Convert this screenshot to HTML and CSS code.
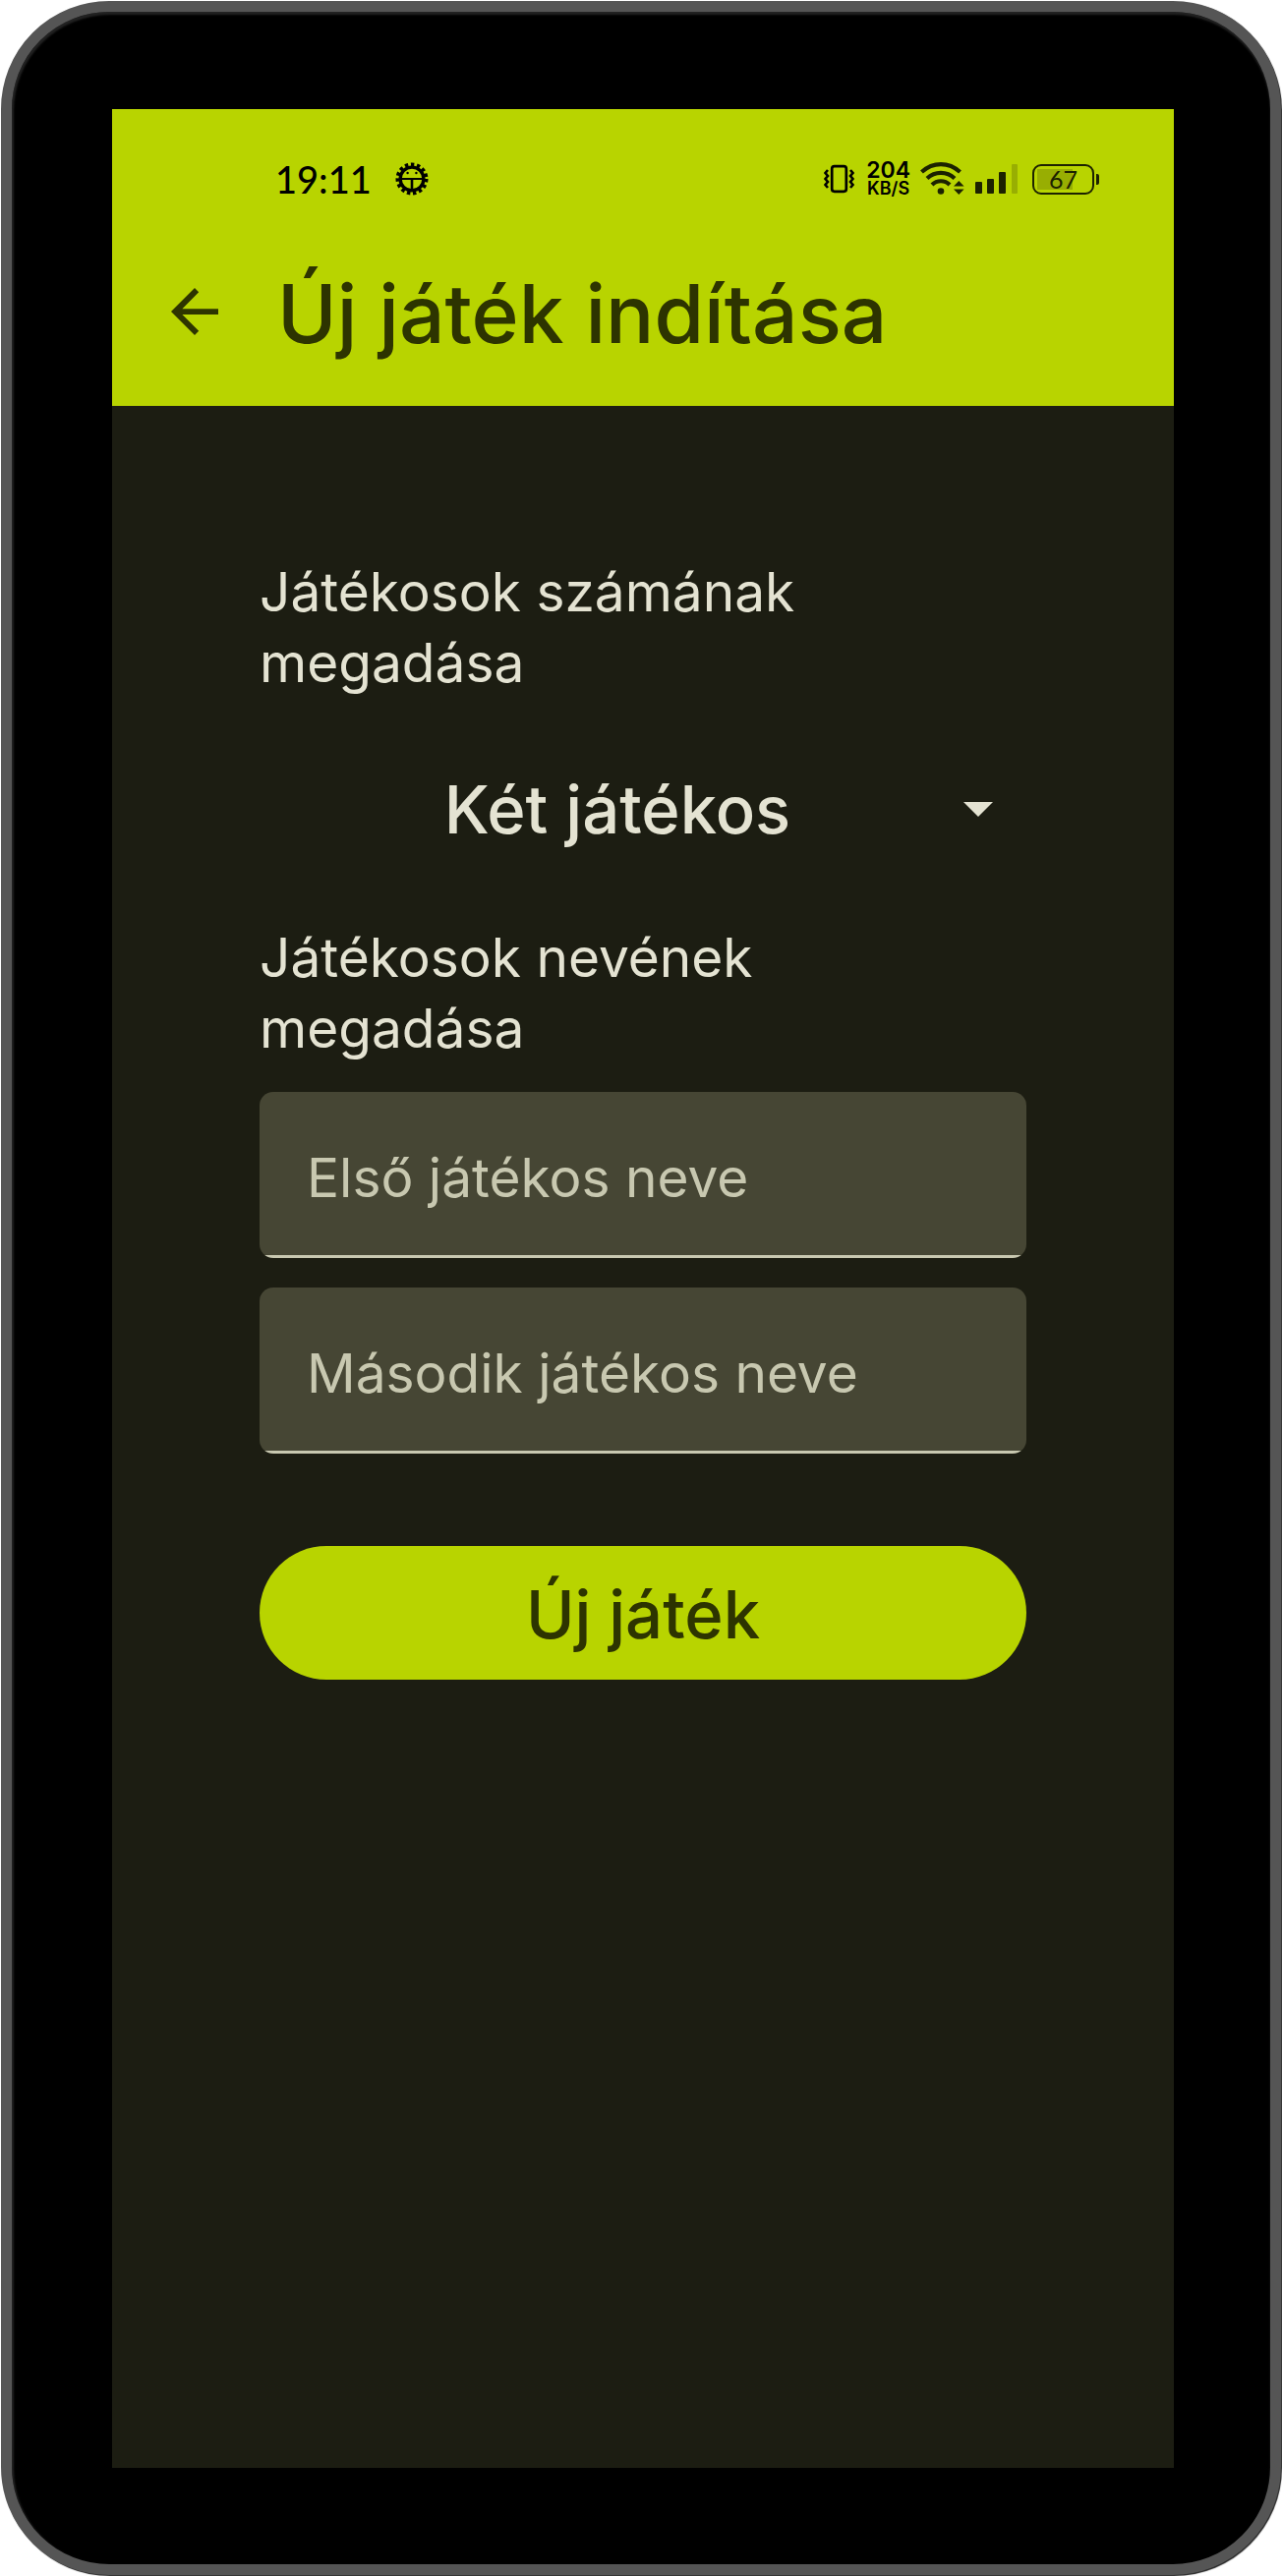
FILE: index.html
```html
<!DOCTYPE html>
<html lang="hu">
<head>
<meta charset="utf-8">
<meta name="viewport" content="width=device-width, initial-scale=1">
<title>Új játék indítása</title>
<link rel="stylesheet" href="styles.css">
</head>
<body>
<div class="phone">
  <div class="screen">
    <header class="top">
      <div class="status">
        <div class="status-group">
          <span class="clock">19:11</span>
          <svg class="gear" width="34" height="34" viewBox="0 0 34 34" aria-hidden="true">
            <circle cx="17" cy="17" r="14.5" fill="none" stroke="#000" stroke-width="4" stroke-dasharray="3.4 2.674"/>
            <circle cx="17" cy="17" r="11.9" fill="none" stroke="#000" stroke-width="3.4"/>
            <path d="M5 17h24" fill="none" stroke="#000" stroke-width="2"/>
            <path d="M17 17v12" fill="none" stroke="#000" stroke-width="2.6"/>
            <circle cx="12.6" cy="11" r="1.2"/><circle cx="21.4" cy="11" r="1.2"/>
          </svg>
        </div>
        <div class="status-group status-right">
          <svg width="34" height="30" viewBox="0 0 34 30" aria-hidden="true">
            <rect x="9.2" y="2.2" width="14.6" height="25.6" rx="2.5" fill="none" stroke="#000" stroke-width="2.7"/>
            <path d="M5 6l-2.500 3 2.500 3-2.500 3 2.500 3-2.500 3 2.500 3M28 6l2.500 3-2.500 3 2.500 3-2.500 3 2.500 3-2.500 3" fill="none" stroke="#000" stroke-width="2.6"/>
          </svg>
          <div class="speed"><span class="speed-value">204</span><span class="speed-unit">KB/S</span></div>
          <svg class="wifi" width="46" height="36" viewBox="0 0 46 36" aria-hidden="true">
            <g fill="none" stroke="#1c2200" stroke-width="4.2">
              <path d="M1.500 11C13 .5 29 .5 40.500 11"/>
              <path d="M7 17.500c8-7.500 20-7.500 28 0"/>
              <path d="M12 24c5-5 13-5 18 0"/>
            </g>
            <g fill="#1c2200"><circle cx="21" cy="30.500" r="3.300"/>
              <path d="M34 25.500l5.300-5.500 5.300 5.500zM34 28.500h10.600l-5.300 5.500z"/></g>
          </svg>
          <svg class="signal" width="44" height="32" viewBox="0 0 44 32" aria-hidden="true">
            <g fill="#1c2200"><rect x="0" y="19" width="7" height="12" rx="1"/><rect x="12" y="16" width="7" height="15" rx="1"/><rect x="24" y="9" width="7" height="22" rx="1"/></g>
            <rect x="37" y="1" width="6" height="30" rx="1" fill="#98ae02"/>
          </svg>
          <div class="battery"><span class="battery-body">67</span><span class="battery-tip"></span></div>
        </div>
      </div>
      <div class="appbar">
        <button class="back" type="button" aria-label="Vissza">
          <svg width="48" height="48" viewBox="0 0 48 48" aria-hidden="true"><path d="M48 21.200H11.400L28.200 4.200 24 0 0 24l24 24 4.200-4.200L11.400 26.900H48z" fill="#2d3400"/></svg>
        </button>
        <h1 class="title">Új játék indítása</h1>
      </div>
    </header>
    <main class="content">
      <form class="form">
        <label class="label" for="count">Játékosok számának megadása</label>
        <div class="picker">
          <select class="select" id="count"><option>Két játékos</option></select>
          <svg class="caret" width="30" height="16" viewBox="0 0 30 16" aria-hidden="true"><path d="M0 0h30L15 15z" fill="#e4e3d2"/></svg>
        </div>
        <fieldset class="names">
          <legend class="label">Játékosok nevének megadása</legend>
          <input class="field" type="text" placeholder="Első játékos neve" aria-label="Első játékos neve">
          <input class="field" type="text" placeholder="Második játékos neve" aria-label="Második játékos neve">
        </fieldset>
        <button class="submit" type="button">Új játék</button>
      </form>
    </main>
  </div>
</div>
</body>
</html>
```
FILE: styles.css
```css
* { box-sizing: border-box; }

body {
  margin: 0;
  padding: 1px;
  background: #fff;
  font-family: Inter, "Liberation Sans", sans-serif;
}

.phone {
  display: flex;
  min-height: calc(100vh - 2px);
  padding: 99px 98px 98px 102px;
  border: 11px solid #555;
  border-radius: 110px;
  background: #000;
  box-shadow: inset 1px 2px 2px 1px #222, 1px 1px 1px #222;
}

.screen {
  flex: 1;
  min-width: 0;
  background: #1c1d12;
  color: #e4e3d2;
}

.top {
  background: #b8d400;
  color: #2d3400;
}

.status {
  display: flex;
  justify-content: space-between;
  align-items: center;
  height: 142px;
  padding: 0 76px 0 166px;
  color: #000;
}

.status-group {
  display: flex;
  align-items: center;
  gap: 24px;
}

.status-right { gap: 10px; }

.clock {
  font-family: Lato, sans-serif;
  font-size: 38px;
  font-weight: 500;
  line-height: 40px;
}

.speed {
  display: flex;
  flex-direction: column;
  align-items: center;
  font-weight: 600;
}

.speed-value { font-size: 23px; line-height: 20px; }
.speed-unit { font-size: 18px; line-height: 18px; }

.battery {
  display: flex;
  align-items: center;
  gap: 2px;
  margin-left: 4px;
  color: #1c2200;
}

.battery-body {
  width: 63px;
  height: 31px;
  border: 2px solid #1c2200;
  border-radius: 9px;
  background: linear-gradient(#98ae02, #98ae02) 3px 3px / 36px 21px no-repeat;
  font-family: Lato, sans-serif;
  font-size: 25px;
  line-height: 27px;
  text-align: center;
}

.battery-tip {
  width: 3px;
  height: 11px;
  border-radius: 0 2px 2px 0;
  background: #1c2200;
}

.appbar {
  display: flex;
  align-items: center;
  gap: 60px;
  height: 160px;
  padding: 0 60px 32px;
}

.back {
  display: flex;
  padding: 0;
  border: 0;
  background: none;
}

.title {
  margin: 6px 0 0;
  font-size: 82px;
  font-weight: 500;
  line-height: 96px;
}

.content { padding: 153px 150px; }

.form {
  display: flex;
  flex-direction: column;
}

.label {
  padding: 0;
  max-width: 600px;
  font-size: 55px;
  line-height: 72px;
}

.picker {
  display: grid;
  align-items: center;
  margin: 60px 0;
}

.picker > * { grid-area: 1 / 1; }

.select {
  width: 100%;
  height: 108px;
  padding: 0 52px 0 0;
  border: 0;
  appearance: none;
  background: transparent;
  color: #e4e3d2;
  font: 500 67px/108px Inter, "Liberation Sans", sans-serif;
  text-align-last: center;
}

.caret {
  justify-self: end;
  margin-right: 34px;
  pointer-events: none;
}

.names {
  display: flex;
  flex-direction: column;
  gap: 30px;
  min-width: 0;
  margin: 0;
  padding: 0;
  border: 0;
}

.names .label { margin-bottom: 29px; }

.field {
  width: 100%;
  height: 169px;
  padding: 4px 48px 0;
  border: 0;
  border-radius: 14px;
  background: linear-gradient(#c8c8b0, #c8c8b0) bottom / 100% 3px no-repeat #464634;
  color: #e4e3d2;
  font: 400 55px/72px Inter, "Liberation Sans", sans-serif;
}

.field::placeholder {
  color: #c8c8b0;
  opacity: 1;
}

.submit {
  height: 136px;
  margin-top: 94px;
  padding-top: 4px;
  border: 0;
  border-radius: 68px;
  background: #b8d400;
  color: #2d3400;
  font: 500 67px/80px Inter, "Liberation Sans", sans-serif;
}
```
